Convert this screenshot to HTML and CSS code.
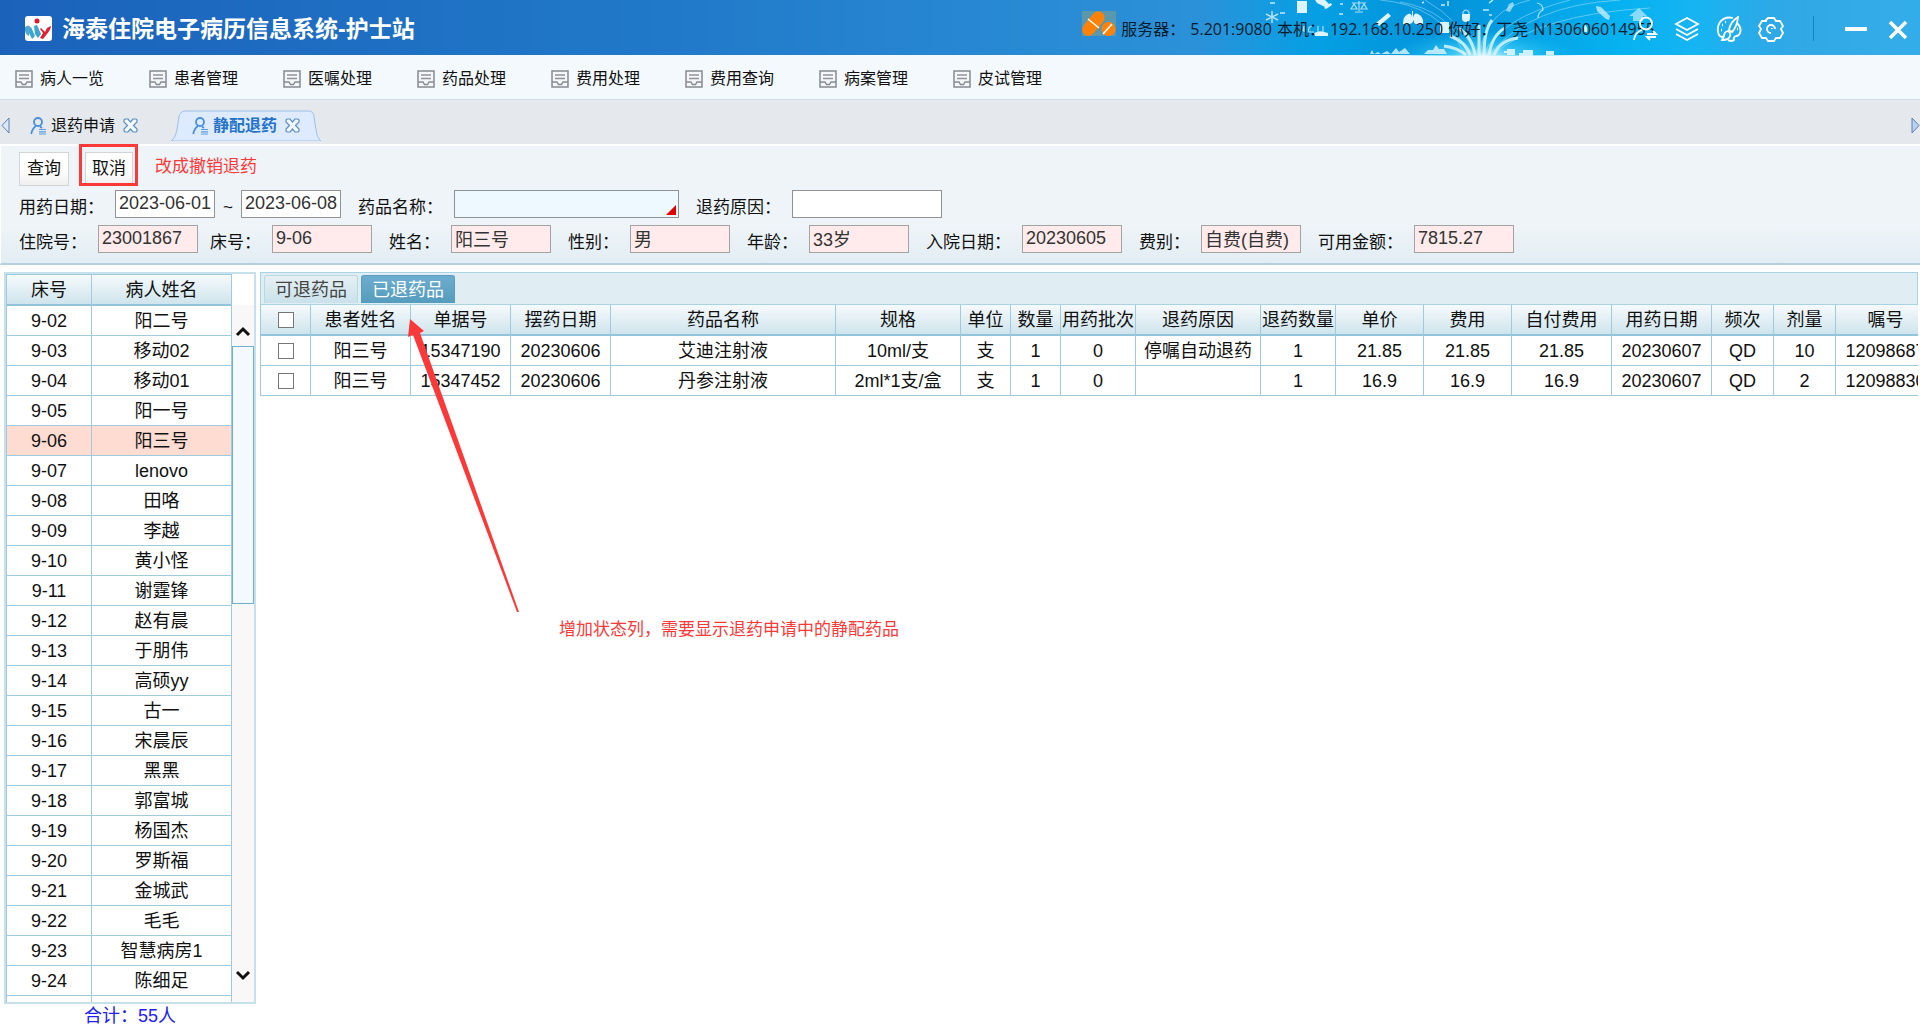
FILE: index.html
```html
<!DOCTYPE html>
<html lang="zh-CN">
<head>
<meta charset="utf-8">
<title>海泰住院电子病历信息系统-护士站</title>
<link rel="stylesheet" href="styles.css">
</head>
<body>
<svg class="symbols" aria-hidden="true">
  <symbol id="i-menu" viewBox="0 0 18 18"><path d="M1 1h16v16H1z" fill="#f4f6f8" stroke="#868a90" stroke-width="1.5"/><path d="M4 5h10M4 8.500h10" stroke="#90949a" stroke-width="1.400"/><path d="M1 12h5l1.500 2.500h3L12 12h5" fill="none" stroke="#868a90" stroke-width="1.400"/></symbol>
  <symbol id="i-user" viewBox="0 0 17 18"><circle cx="8" cy="5" r="4" fill="none" stroke="#4a8fdc" stroke-width="1.800"/><path d="M6 9C3 11 2 13 1.200 17M10 9.500l2 1.500" fill="none" stroke="#4a8fdc" stroke-width="1.800"/><path d="M9 12.500h7M9 14.800h7M9 17h7" stroke="#5b9ade" stroke-width="1.200"/></symbol>
  <symbol id="i-close" viewBox="0 0 15 15"><path d="M2 1h3l2.500 3L10 1h3l1 1v2l-3.500 3.500L14 11v2l-1 1h-3l-2.500-3L5 14H2l-1-1v-2l3.500-3.500L1 4V2z" fill="#f2f8fe" stroke="#5d8fc0" stroke-width="1.200"/></symbol>
</svg>

<header class="titlebar">
  <svg class="titlebar-art" viewBox="0 0 700 56" aria-hidden="true">
    <defs>
      <linearGradient id="sky" x1="0" x2="1" y1="0" y2="0"><stop offset="0" stop-color="#059fe4" stop-opacity="0"/><stop offset=".17" stop-color="#049fe4"/><stop offset=".35" stop-color="#0493da"/><stop offset=".6" stop-color="#06b2f0"/><stop offset=".72" stop-color="#18b4f2"/><stop offset=".88" stop-color="#2fa8e6" stop-opacity="0"/></linearGradient>
      <radialGradient id="glow"><stop offset="0" stop-color="#e8fbff"/><stop offset=".35" stop-color="#4dd6fb" stop-opacity=".7"/><stop offset="1" stop-color="#12c3f7" stop-opacity="0"/></radialGradient>
    </defs>
    <path d="M0 0h700v55H0z" fill="url(#sky)"/>
    <ellipse cx="284" cy="56" rx="95" ry="26" fill="url(#glow)"/>
    <g fill="none" stroke="#d8f5ff">
      <g stroke-width="1" opacity=".4"><path d="M265 54Q240 5 180 0M268 54Q250 10 200 2M290 54Q330 5 420 0M294 54Q340 14 450 8M280 54Q285 10 330 0M276 54Q260 20 225 0M284 54Q300 18 370 0"/></g>
      <g stroke-width="3" opacity=".85"><path d="M270 55Q266 42 250 36M275 55Q272 36 258 28M279 55V25M284 55Q284 30 292 20M289 55Q292 35 305 28M294 55Q300 40 318 38M266 55Q258 48 244 46"/></g>
    </g>
    <g stroke="#d8f3ff" stroke-width="1.500" opacity=".8"><path d="M72 11v12M66 14l12 6M66 20l12-6"/></g>
    <g fill="#def5ff">
      <path d="M97 1h10v12H97z"/><path d="M115 0h10l4 4 2-1 1 2-6 4-2-1 1-1-8-4z"/>
      <path d="m176 23 12-10 3 3-12 10z"/>
      <path d="M212 11h1v7q1-6 5-4 6 3 5 10-5 2-9-1v-3l-2 3q-5 3-9 1 0-8 5-10 4-1 4 4z"/>
      <path d="M240 22h9v11h-9z"/><path d="M262 14h8v4q0 4-4 4t-4-4z"/>
      <path d="M306 11l3-7 4-2 1 3-4 7z" opacity=".6"/><path d="m396 6 5 1 9 9-1 4-3-1-9-8z" opacity=".7"/><path d="m439 8-10 8h4v5h10v-5h4z" opacity=".6"/>
      <path d="M307 49h8v6h-8v-2h-3v-2h3zM319 53h4v-3h10v6h-14zM346 51h8v4h-8z" opacity=".9"/><path d="M170 54l2-4 2 4 4-2 3 2 6-3 4 3 5-6 3 4 6-4 5 6zM224 54l4-4h5l3-5 3 4h5l3 5z" opacity=".8"/>
      <path d="M114 33q6-3 14 0v3h-13zM384 24q4 2 3 8h-3z"/>
    </g>
    <g fill="none" stroke="#d3f0ff" stroke-width="1.200" opacity=".8"><path d="M159 1v10M155 12h8M152 3h14M154 4l-3 5h6zM164 4l-3 5h6zM263 14v-2q3-4 6 0v2M337 3q6 1 6 7-5 2-5 8M100 5h5M100 9h5M103 31l1-5v6M114 26q-7 0-5 6h5M118 26v6h5v-6"/></g>
    <path d="M70 3h5M80 13h5M140 4h3M139 14h4M222 3l2-1M241 5h4M248 1v5M283 10h6M289 3l4-3M289 15h3" stroke="#bfeaff" stroke-width="1.500"/>
  </svg>
  <svg class="logo" viewBox="0 0 27 25" aria-hidden="true"><rect width="27" height="25" rx="3" fill="#fff"/><circle cx="12" cy="5" r="2.500" fill="#e3172b"/><path d="m2 13 4-2 4 9-3 3zM9 10l3-1 4 9-3 4-3-4z" fill="#3da5cd"/><path d="M0 11q4-3 5 0l-1 9q-3-1-4-5z" fill="#4ea9d1"/><path d="m16 12 4 4 2-4 4-2q0 3-4 8l-4 5-3-1 3-5-3-4z" fill="#e3202e"/></svg>
  <h1>海泰住院电子病历信息系统-护士站</h1>
  <div class="session">
    <svg class="pills" viewBox="0 0 34 25" aria-hidden="true"><path d="M0 0h34v25H0z" fill="#5c98ac"/><path d="m2 14 9-11q6-6 11 1 1 4-1 7L11 23q-5 4-9 0-4-4 0-9z" fill="#ff8208"/><circle cx="26.500" cy="18" r="7" fill="#ff8208"/><path d="m6 8 11 9M21 23l9-10" stroke="#fff" stroke-width="1.500"/></svg>
    <p><span>服务器：</span><span>5.201:9080</span><span>本机：</span><span>192.168.10.250</span><span>你好：丁尧</span><span>N130606014955</span></p>
  </div>
  <div class="tools">
    <button type="button" aria-label="切换用户"><svg viewBox="0 0 26 26"><circle cx="14" cy="7.500" r="6" /><path d="M2 24q1-8 8-10M15 18h9l-3-3M24 21h-9l3 3"/></svg></button>
    <button type="button" aria-label="图层"><svg viewBox="0 0 26 26"><path d="m13 2 11 6-11 6L2 8zM2 13l11 6 11-6M2 18l11 6 11-6"/></svg></button>
    <button type="button" aria-label="换肤"><svg viewBox="0 0 26 26"><path d="M17 2Q9 0 4 6q-4 6-1 13 2 3 5 1M21 7q5 5 3 10-1 3-4 3-3 1-2 4-3 2-6 0M22 1q-8 5-9 13l3 2q5-5 6-15zM12 15q-4 1-4 5l-2 4q7 0 8-4 1-3-2-5z"/><path d="M6 9h1M9 6h1M5 14h1M21 13h1" stroke-width="2.500"/></svg></button>
    <button type="button" aria-label="设置"><svg viewBox="0 0 26 26"><path d="m8 4 2-2h6l2 3 4 0 3 5-2 3 2 4-3 5h-4l-2 3h-6l-2-3H4l-3-5 2-4-2-3 3-5h4z"/><path d="M17 13a4 4 0 1 0-4 4M14 13v-1"/></svg></button>
    <i class="divider"></i>
    <button type="button" aria-label="最小化"><svg viewBox="0 0 26 26"><path d="M2 13h22" stroke-width="4"/></svg></button>
    <button type="button" aria-label="关闭"><svg viewBox="0 0 26 26"><path d="m5 6 16 16M21 6 5 22" stroke-width="3.500"/></svg></button>
  </div>
</header>

<nav class="menubar">
  <a href="#"><svg><use href="#i-menu"/></svg>病人一览</a>
  <a href="#"><svg><use href="#i-menu"/></svg>患者管理</a>
  <a href="#"><svg><use href="#i-menu"/></svg>医嘱处理</a>
  <a href="#"><svg><use href="#i-menu"/></svg>药品处理</a>
  <a href="#"><svg><use href="#i-menu"/></svg>费用处理</a>
  <a href="#"><svg><use href="#i-menu"/></svg>费用查询</a>
  <a href="#"><svg><use href="#i-menu"/></svg>病案管理</a>
  <a href="#"><svg><use href="#i-menu"/></svg>皮试管理</a>
</nav>

<div class="doc-tabs">
  <button type="button" class="scroll-tabs" aria-label="向左"><svg viewBox="0 0 9 17"><path d="M8 1v15L1 8.500z" fill="#dbe8f8" stroke="#5b80b4"/></svg></button>
  <div class="doc-tab"><svg class="user"><use href="#i-user"/></svg><a href="#">退药申请</a><button type="button" aria-label="关闭退药申请"><svg><use href="#i-close"/></svg></button></div>
  <div class="doc-tab active">
    <svg class="tab-shape" viewBox="0 0 152 31" preserveAspectRatio="none" aria-hidden="true"><path d="M0 31Q4 29 6 20L8 7Q9 1 15 1H139Q145 1 145 7L147 20Q148 28 152 31z" fill="#deebff" stroke="#9dbde8"/></svg>
    <svg class="user"><use href="#i-user"/></svg><a href="#">静配退药</a><button type="button" aria-label="关闭静配退药"><svg><use href="#i-close"/></svg></button>
  </div>
  <button type="button" class="scroll-tabs next" aria-label="向右"><svg viewBox="0 0 9 17"><path d="M1 1v15l7-7.500z" fill="#b9d0ee" stroke="#5b80b4"/></svg></button>
</div>

<form class="query">
  <div class="actions">
    <button type="button">查询</button>
    <span class="marked"><button type="button">取消</button></span>
    <span class="note">改成撤销退药</span>
  </div>
  <div class="fields">
    <label for="from">用药日期：</label><input id="from" class="w-m" value="2023-06-01">
    <label for="to" class="tilde">~</label><input id="to" class="w-m" value="2023-06-08">
    <label for="drug">药品名称：</label><span class="lookup"><input id="drug"></span>
    <label for="reason">退药原因：</label><input id="reason" class="w-l">
  </div>
  <div class="fields info">
    <label for="f1">住院号：</label><input id="f1" class="w-m" value="23001867" readonly>
    <label for="f2" class="near">床号：</label><input id="f2" class="w-m" value="9-06" readonly>
    <label for="f3">姓名：</label><input id="f3" class="w-m" value="阳三号" readonly>
    <label for="f4">性别：</label><input id="f4" class="w-m" value="男" readonly>
    <label for="f5">年龄：</label><input id="f5" class="w-m" value="33岁" readonly>
    <label for="f6">入院日期：</label><input id="f6" class="w-m" value="20230605" readonly>
    <label for="f7">费别：</label><input id="f7" class="w-m" value="自费(自费)" readonly>
    <label for="f8">可用金额：</label><input id="f8" class="w-m" value="7815.27" readonly>
  </div>
</form>

<main class="workspace">
  <aside class="patients">
    <div class="patient-list">
      <div class="list-view">
      <table>
        <colgroup><col class="c-bed"><col></colgroup>
        <thead><tr><th>床号</th><th>病人姓名</th></tr></thead>
        <tbody>
          <tr><td>9-02</td><td>阳二号</td></tr>
          <tr><td>9-03</td><td>移动02</td></tr>
          <tr><td>9-04</td><td>移动01</td></tr>
          <tr><td>9-05</td><td>阳一号</td></tr>
          <tr class="selected"><td>9-06</td><td>阳三号</td></tr>
          <tr><td>9-07</td><td>lenovo</td></tr>
          <tr><td>9-08</td><td>田咯</td></tr>
          <tr><td>9-09</td><td>李越</td></tr>
          <tr><td>9-10</td><td>黄小怪</td></tr>
          <tr><td>9-11</td><td>谢霆锋</td></tr>
          <tr><td>9-12</td><td>赵有晨</td></tr>
          <tr><td>9-13</td><td>于朋伟</td></tr>
          <tr><td>9-14</td><td>高硕yy</td></tr>
          <tr><td>9-15</td><td>古一</td></tr>
          <tr><td>9-16</td><td>宋晨辰</td></tr>
          <tr><td>9-17</td><td>黑黑</td></tr>
          <tr><td>9-18</td><td>郭富城</td></tr>
          <tr><td>9-19</td><td>杨国杰</td></tr>
          <tr><td>9-20</td><td>罗斯福</td></tr>
          <tr><td>9-21</td><td>金城武</td></tr>
          <tr><td>9-22</td><td>毛毛</td></tr>
          <tr><td>9-23</td><td>智慧病房1</td></tr>
          <tr><td>9-24</td><td>陈细足</td></tr>
          <tr><td></td><td></td></tr>
        </tbody>
      </table>
      </div>
      <div class="scrollbar">
        <button type="button" aria-label="向上滚动"><svg viewBox="0 0 16 12"><path d="m2 10 6-6 6 6" /></svg></button>
        <div class="track"><div class="thumb"></div></div>
        <button type="button" aria-label="向下滚动"><svg viewBox="0 0 16 12"><path d="m2 2 6 6 6-6"/></svg></button>
      </div>
    </div>
    <p class="total">合计：55人</p>
  </aside>

  <section class="drugs">
    <div class="sub-tabs"><button type="button">可退药品</button><button type="button" class="active">已退药品</button></div>
    <table>
      <colgroup><col class="w51"><col class="w100"><col class="w100"><col class="w100"><col class="w225"><col class="w125"><col class="w50"><col class="w50"><col class="w75"><col class="w125"><col class="w75"><col class="w88"><col class="w88"><col class="w100"><col class="w100"><col class="w62"><col class="w62"><col class="w100"></colgroup>
      <thead><tr><th><input type="checkbox" aria-label="全选"></th><th>患者姓名</th><th>单据号</th><th>摆药日期</th><th>药品名称</th><th>规格</th><th>单位</th><th>数量</th><th>用药批次</th><th>退药原因</th><th>退药数量</th><th>单价</th><th>费用</th><th>自付费用</th><th>用药日期</th><th>频次</th><th>剂量</th><th>嘱号</th></tr></thead>
      <tbody>
        <tr><td><input type="checkbox" aria-label="选择 15347190"></td><td>阳三号</td><td>15347190</td><td>20230606</td><td>艾迪注射液</td><td>10ml/支</td><td>支</td><td>1</td><td>0</td><td>停嘱自动退药</td><td>1</td><td>21.85</td><td>21.85</td><td>21.85</td><td>20230607</td><td>QD</td><td>10</td><td>12098687</td></tr>
        <tr><td><input type="checkbox" aria-label="选择 15347452"></td><td>阳三号</td><td>15347452</td><td>20230606</td><td>丹参注射液</td><td>2ml*1支/盒</td><td>支</td><td>1</td><td>0</td><td></td><td>1</td><td>16.9</td><td>16.9</td><td>16.9</td><td>20230607</td><td>QD</td><td>2</td><td>12098830</td></tr>
      </tbody>
    </table>
    <svg class="arrow" viewBox="0 0 112 294" aria-hidden="true"><path d="m2 0 14 12-4 2 99 279h-2L5 16l-5 2z" fill="#fc3939"/></svg>
    <p class="note callout">增加状态列，需要显示退药申请中的静配药品</p>
  </section>
</main>
</body>
</html>
```
FILE: styles.css
```css
* { box-sizing: border-box; }

body {
  margin: 0;
  height: 100vh;
  display: flex;
  flex-direction: column;
  overflow: hidden;
  background: #fff;
  color: #111;
  font: 18px/24px "Liberation Sans", "Noto Sans CJK SC", sans-serif;
}

p, h1 { margin: 0; }
button, input { font: inherit; color: inherit; }
button { padding: 0; border: 0; background: none; }
a { color: inherit; text-decoration: none; }
svg { display: block; flex: none; }
.symbols { position: absolute; width: 0; height: 0; }
.note { color: #fc3939; font-size: 17px; }

/* Title bar */
.titlebar {
  position: relative;
  flex: none;
  height: 55px;
  display: flex;
  align-items: center;
  padding: 2px 9px 0 25px;
  background: linear-gradient(90deg, #1b62bb 0, #2078c8 33%, #2a8dd6 57%, #2c97dc 70%, #33ade9 100%);
}
.titlebar > * { position: relative; }
.titlebar .titlebar-art { position: absolute; top: 0; right: 20px; width: 700px; height: 56px; }
.logo { width: 27px; height: 25px; }
h1 { margin-left: 10px; color: #fff; font-size: 23px; line-height: 32px; font-weight: 700; }
.session { display: flex; align-items: center; gap: 5px; margin-left: auto; color: #0a1c2c; }
.session p { display: flex; gap: 5px; font: 16px/24px "Open Sans", "Noto Sans CJK SC", sans-serif; white-space: nowrap; }
.pills { width: 34px; height: 25px; margin-bottom: 10px; }
.tools { display: flex; align-items: center; gap: 16px; margin-left: -23px; }
.tools svg { width: 26px; height: 26px; fill: none; stroke: #fff; stroke-width: 1.8; }
.divider { width: 1px; height: 25px; margin: 0 13px; background: #1583c4; }

/* Main menu */
.menubar {
  flex: none;
  height: 45px;
  display: flex;
  align-items: center;
  gap: 45px;
  padding: 4px 15px 0;
  background: #f4f9fe;
  border-bottom: 1px solid #d3dcee;
  font-size: 16px;
}
.menubar a { display: flex; align-items: center; gap: 7px; }
.menubar svg { width: 18px; height: 18px; }

/* Document tabs */
.doc-tabs {
  flex: none;
  height: 44px;
  display: flex;
  align-items: center;
  padding: 7px 0 0 1px;
  background: #e5e9ee;
  font-size: 16px;
}
.scroll-tabs svg { width: 9px; height: 17px; }
.scroll-tabs.next { margin-left: auto; }
.doc-tab { position: relative; display: flex; align-items: center; gap: 4px; padding: 0 20px; }
.doc-tab > * { position: relative; }
.doc-tab button { margin-left: 4px; }
.doc-tab button svg { width: 15px; height: 15px; }
.doc-tab .user { width: 17px; height: 18px; }
.doc-tab.active { height: 31px; margin-left: 13px; padding: 0 21px; color: #2473c8; font-weight: 700; }
.doc-tab.active .tab-shape { position: absolute; top: 0; left: 0; width: 100%; height: 100%; }

/* Query form */
.query {
  flex: none;
  display: flex;
  flex-direction: column;
  padding: 6px 18px 10px;
  border-top: 2px solid #fff;
  border-bottom: 2px solid #b4d0e0;
  border-left: 1px solid #fff;
  background: linear-gradient(#eff4f9, #eef4f8 70%, #e2edf3);
}
.actions { display: flex; height: 38px; align-items: flex-start; }
.actions button {
  width: 50px;
  height: 34px;
  border: 1px solid #d2d5d8;
  background: linear-gradient(#fff, #fdfdfd 60%, #eee);
  font-size: 17px;
}
.marked { margin: -8px 0 0 10px; padding: 5px 3px 0; width: 59px; height: 42px; overflow: hidden; border: 3px solid #fc3939; }
.marked button { width: 48px; }
.actions .note { margin: 3px 0 0 17px; }
.fields { display: flex; height: 28px; margin-bottom: 7px; }
.fields + .info { margin-bottom: 0; }
.fields label { margin-right: 11px; padding-top: 6px; font-size: 17px; white-space: nowrap; }
.fields input + label, .fields .lookup + label { margin-left: 17px; }
.fields input + .near { margin-left: 12px; }
.fields input + .tilde { margin: 0 8px; }
.fields input { height: 28px; padding: 0 3px 2px; border: 1px solid #8f9396; background: #fff; color: #333; }
.fields .w-m { width: 100px; }
.fields .w-l { width: 150px; }
.fields.info input { border-color: #a3a3a3; background: #ffebeb; }
.lookup { position: relative; }
.fields .lookup input { width: 225px; background: #eef9ff; }
.lookup::after {
  content: "";
  position: absolute;
  right: 3px;
  bottom: 3px;
  border-left: 10px solid transparent;
  border-bottom: 10px solid #e00000;
}

/* Shared grid look */
table { border-collapse: separate; border-spacing: 0; table-layout: fixed; }
th, td { height: 30px; padding: 0; line-height: 24px; text-align: center; white-space: nowrap; border-right: 1px solid #a0cbdf; border-bottom: 1px solid #a0cbdf; }
th { height: 31px; font-weight: 400; border-bottom: 2px solid #94c4da; background: linear-gradient(#f6fafc, #cfe4ed); }

/* Workspace */
.workspace { flex: 1; min-height: 0; display: flex; gap: 4px; padding: 7px 2px 0 4px; }
.patients { width: 252px; flex: none; display: flex; flex-direction: column; }
.patient-list { flex: 1; min-height: 0; display: flex; border: 2px solid #c6e0ec; }
.list-view { flex: 1; overflow: hidden; border-top: 1px solid #a0cbdf; border-left: 1px solid #a0cbdf; }
.list-view table { width: 100%; }
.c-bed { width: 85px; }
.selected { background: #fedcd2; }
.scrollbar { width: 22px; display: flex; flex-direction: column; margin-top: 31px; background: #f8f8f8; }
.scrollbar button { height: 41px; display: flex; align-items: center; justify-content: center; padding-bottom: 12px; }
.scrollbar button:first-child { padding: 10px 0 0; }
.scrollbar svg { width: 16px; height: 12px; fill: none; stroke: #111; stroke-width: 3; }
.track { flex: 1; }
.thumb { height: 42%; border: 1px solid #6fb0cd; background: #f3f9fd; }
.total { height: 26px; padding-left: 80px; color: #2222f0; }

.drugs { position: relative; flex: 1; min-width: 0; overflow: hidden; }
.sub-tabs { height: 33px; display: flex; align-items: flex-end; gap: 3px; padding: 0 3px 1px; border: 1px solid #a9d2e2; background: #e0edf3; }
.sub-tabs button { width: 94px; height: 28px; border: 1px solid #b9d8e4; border-bottom: 0; border-radius: 3px 3px 0 0; background: linear-gradient(#e6f0f4, #cae1eb); color: #444; }
.sub-tabs .active { border-color: #5a9cbc; background: linear-gradient(#6daccf, #559cbd); color: #fff; }
.drugs table { width: 1674px; }
.drugs th:first-child, .drugs td:first-child { border-left: 1px solid #a0cbdf; }
.drugs input { display: block; appearance: none; width: 16px; height: 16px; margin: 1px auto 0; border: 1px solid #777; background: #fff; }
.w50 { width: 50px; }
.w51 { width: 51px; }
.w62 { width: 62px; }
.w75 { width: 75px; }
.w88 { width: 88px; }
.w100 { width: 100px; }
.w125 { width: 125px; }
.w225 { width: 225px; }
.arrow { position: absolute; left: 148px; top: 47px; width: 112px; height: 294px; }
.callout { position: absolute; left: 299px; top: 346px; white-space: nowrap; }
```
